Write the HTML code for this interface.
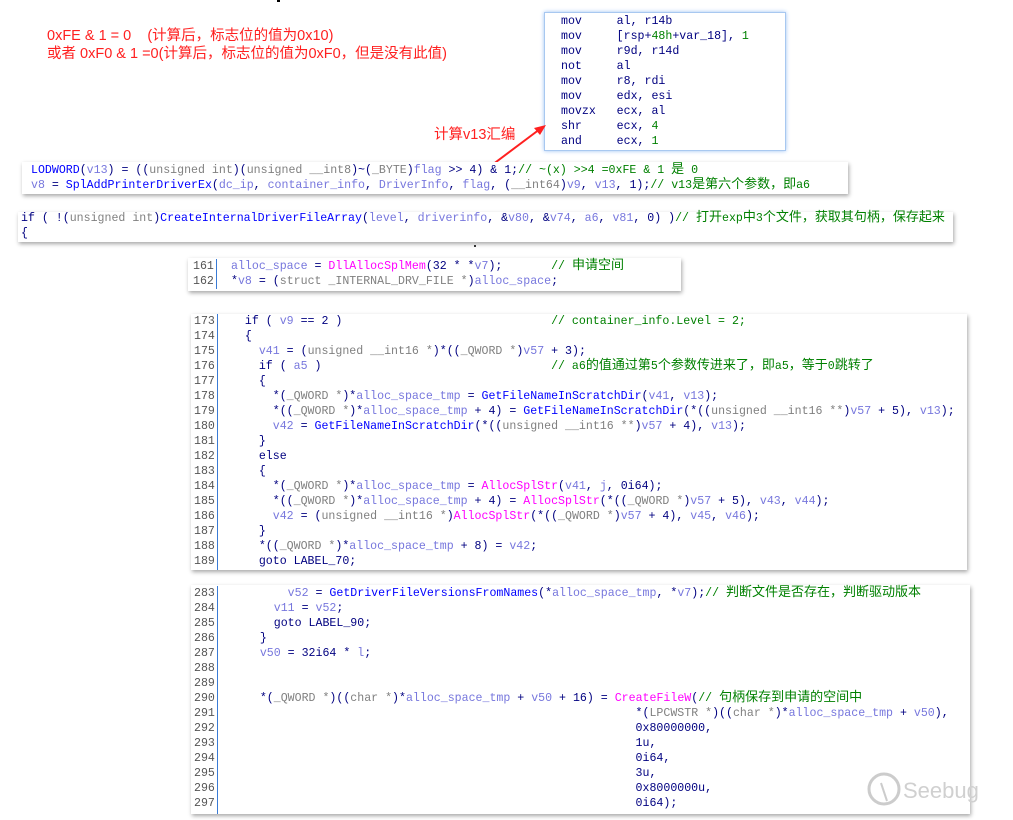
<!DOCTYPE html>
<html><head><meta charset="utf-8"><style>
body{margin:0;width:1013px;height:820px;background:#fff;position:relative;overflow:hidden;font-family:"Liberation Mono","Noto Sans CJK SC",monospace;}
.box{position:absolute;background:#fff;box-shadow:1px 2px 4px rgba(0,0,0,.35);}
pre{margin:0;font-family:"Liberation Mono","Noto Sans CJK SC",monospace;font-size:11.6px;line-height:15px;color:#000080;white-space:pre;}
.v{color:#7777dd}.t{color:#808080}.f{color:#0000ff}.m{color:#ff00ff}.c{color:#008000}.n{color:#008000}
.z{font-size:13px;line-height:14px}
.ln{position:absolute;left:0;top:0;width:26px;border-right:1px solid #3a7bd5;color:#555;text-align:left;padding-left:2px;box-sizing:border-box}
.code{position:absolute;top:0}
.red{position:absolute;color:#ff2020;font-family:"Liberation Sans","Noto Sans CJK SC",sans-serif;font-size:14.5px;line-height:18px;white-space:pre}
</style></head><body>
<div style="position:absolute;left:277px;top:0;width:3px;height:2px;background:#000"></div>
<div class="red" style="left:47px;top:27px">0xFE &amp; 1 = 0    (计算后，标志位的值为0x10)
或者 0xF0 &amp; 1 =0(计算后，标志位的值为0xF0，但是没有此值)</div>
<div class="red" style="left:434px;top:126px">计算v13汇编</div>

<div class="box" style="left:544px;top:12px;width:240px;height:137px;border:1px solid #a8c8f0;box-shadow:0 0 4px #9cc3f5">
<pre style="position:absolute;left:16px;top:1px">mov     al, r14b
mov     [rsp+<span class="n">48h</span>+var_18], <span class="n">1</span>
mov     r9d, r14d
not     al
mov     r8, rdi
mov     edx, esi
movzx   ecx, al
shr     ecx, <span class="n">4</span>
and     ecx, <span class="n">1</span></pre></div>

<svg style="position:absolute;left:0;top:0" width="1013" height="820"><line x1="488" y1="168" x2="540" y2="129" stroke="#ff2020" stroke-width="2"/><polygon points="546,125 534,128 540,135" fill="#ff2020"/></svg>

<div class="box" style="left:22px;top:162px;width:826px;height:32px">
<pre style="position:absolute;left:9px;top:1px"><span class="f">LODWORD</span>(<span class="v">v13</span>) = ((<span class="t">unsigned int</span>)(<span class="t">unsigned __int8</span>)~(<span class="t">_BYTE</span>)<span class="v">flag</span> &gt;&gt; 4) &amp; 1;<span class="c">// ~(x) &gt;&gt;4 =0xFE &amp; 1 <span class="z">是</span> 0</span>
<span class="v">v8</span> = <span class="f">SplAddPrinterDriverEx</span>(<span class="v">dc_ip</span>, <span class="v">container_info</span>, <span class="v">DriverInfo</span>, <span class="v">flag</span>, (<span class="t">__int64</span>)<span class="v">v9</span>, <span class="v">v13</span>, 1);<span class="c">// v13<span class="z">是第六个参数，即</span>a6</span></pre></div>

<div class="box" style="left:18px;top:212px;width:935px;height:30px">
<pre style="position:absolute;left:3px;top:-1px">if ( !(<span class="t">unsigned int</span>)<span class="f">CreateInternalDriverFileArray</span>(<span class="v">level</span>, <span class="v">driverinfo</span>, &amp;<span class="v">v80</span>, &amp;<span class="v">v74</span>, <span class="v">a6</span>, <span class="v">v81</span>, 0) )<span class="c">// <span class="z">打开</span>exp<span class="z">中</span>3<span class="z">个文件，获取其句柄，保存起来</span></span>
{</pre></div>
<div style="position:absolute;left:474px;top:245px;width:2px;height:2px;background:#333"></div>

<div class="box" style="left:188px;top:258px;width:493px;height:33px">
<pre class="ln" style="left:3px;top:1px">161
162</pre>
<pre class="code" style="left:43px;top:1px"><span class="v">alloc_space</span> = <span class="m">DllAllocSplMem</span>(32 * *<span class="v">v7</span>);       <span class="c">// <span class="z">申请空间</span></span>
*<span class="v">v8</span> = (<span class="t">struct _INTERNAL_DRV_FILE *</span>)<span class="v">alloc_space</span>;</pre></div>

<div class="box" style="left:191px;top:314px;width:776px;height:256px">
<pre class="ln" style="left:1px;top:0px;height:256px">173
174
175
176
177
178
179
180
181
182
183
184
185
186
187
188
189</pre>
<pre class="code" style="left:40px;top:0px">  if ( <span class="v">v9</span> == 2 )                              <span class="c">// container_info.Level = 2;</span>
  {
    <span class="v">v41</span> = (<span class="t">unsigned __int16 *</span>)*((<span class="t">_QWORD *</span>)<span class="v">v57</span> + 3);
    if ( <span class="v">a5</span> )                                 <span class="c">// a6<span class="z">的值通过第</span>5<span class="z">个参数传进来了，即</span>a5<span class="z">，等于</span>0<span class="z">跳转了</span></span>
    {
      *(<span class="t">_QWORD *</span>)*<span class="v">alloc_space_tmp</span> = <span class="f">GetFileNameInScratchDir</span>(<span class="v">v41</span>, <span class="v">v13</span>);
      *((<span class="t">_QWORD *</span>)*<span class="v">alloc_space_tmp</span> + 4) = <span class="f">GetFileNameInScratchDir</span>(*((<span class="t">unsigned __int16 **</span>)<span class="v">v57</span> + 5), <span class="v">v13</span>);
      <span class="v">v42</span> = <span class="f">GetFileNameInScratchDir</span>(*((<span class="t">unsigned __int16 **</span>)<span class="v">v57</span> + 4), <span class="v">v13</span>);
    }
    else
    {
      *(<span class="t">_QWORD *</span>)*<span class="v">alloc_space_tmp</span> = <span class="m">AllocSplStr</span>(<span class="v">v41</span>, <span class="v">j</span>, 0i64);
      *((<span class="t">_QWORD *</span>)*<span class="v">alloc_space_tmp</span> + 4) = <span class="m">AllocSplStr</span>(*((<span class="t">_QWORD *</span>)<span class="v">v57</span> + 5), <span class="v">v43</span>, <span class="v">v44</span>);
      <span class="v">v42</span> = (<span class="t">unsigned __int16 *</span>)<span class="m">AllocSplStr</span>(*((<span class="t">_QWORD *</span>)<span class="v">v57</span> + 4), <span class="v">v45</span>, <span class="v">v46</span>);
    }
    *((<span class="t">_QWORD *</span>)*<span class="v">alloc_space_tmp</span> + 8) = <span class="v">v42</span>;
    goto LABEL_70;</pre></div>

<div class="box" style="left:191px;top:585px;width:779px;height:229px">
<pre class="ln" style="left:1px;top:1px;height:228px">283
284
285
286
287
288
289
290
291
292
293
294
295
296
297</pre>
<pre class="code" style="left:41px;top:1px">        <span class="v">v52</span> = <span class="f">GetDriverFileVersionsFromNames</span>(*<span class="v">alloc_space_tmp</span>, *<span class="v">v7</span>);<span class="c">// <span class="z">判断文件是否存在，判断驱动版本</span></span>
      <span class="v">v11</span> = <span class="v">v52</span>;
      goto LABEL_90;
    }
    <span class="v">v50</span> = 32i64 * <span class="v">l</span>;


    *(<span class="t">_QWORD *</span>)((<span class="t">char *</span>)*<span class="v">alloc_space_tmp</span> + <span class="v">v50</span> + 16) = <span class="m">CreateFileW</span>(<span class="c">// <span class="z">句柄保存到申请的空间中</span></span>
                                                          *(<span class="t">LPCWSTR *</span>)((<span class="t">char *</span>)*<span class="v">alloc_space_tmp</span> + <span class="v">v50</span>),
                                                          0x80000000,
                                                          1u,
                                                          0i64,
                                                          3u,
                                                          0x8000000u,
                                                          0i64);</pre>
<svg style="position:absolute;left:676px;top:186px" width="36" height="40"><circle cx="17" cy="18" r="15" fill="none" stroke="#ccc" stroke-width="3"/><line x1="14" y1="12" x2="20" y2="30" stroke="#ccc" stroke-width="2"/></svg>
<div style="position:absolute;left:712px;top:193px;font-family:'Liberation Sans',sans-serif;font-size:22px;color:#d0d0d0">Seebug</div>
</div>
</body></html>
